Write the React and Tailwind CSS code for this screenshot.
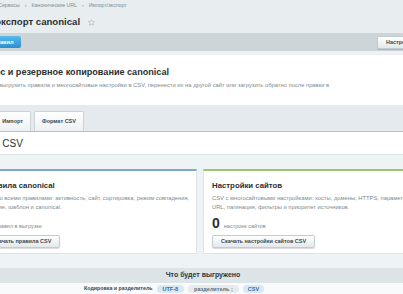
import { Star } from "lucide-react"

const btn =
  "h-[13px] px-[8px] flex items-center rounded-[2px] border border-[#c3ccd1] bg-gradient-to-b from-white to-[#e3e8ea] shadow-[0_1px_1px_rgba(0,0,0,0.15)] text-[5.5px] font-bold text-[#3b4750] whitespace-nowrap"

const Card = ({ accent, title, lines, count, unit, button }) => (
  <div className={`bg-white border border-[#dde4e7] border-t-2 ${accent} h-[85px] px-[8px] pt-[9px]`}>
    <div className="text-[7.8px] font-bold text-[#2a2f33] leading-[11px] whitespace-nowrap">{title}</div>
    <div className="mt-[3px] text-[5.8px] text-[#7d8a92] leading-[9px] whitespace-nowrap">
      {lines[0]}
      <br />
      {lines[1]}
    </div>
    <div className="mt-[4px] flex items-end gap-[4px] h-[14px]">
      <span className="text-[14px] font-bold text-[#2a2f33] leading-[14px]">{count}</span>
      <span className="text-[5.5px] text-[#7d8a92] leading-[8px]">{unit}</span>
    </div>
    <div className="mt-[5px] flex">
      <div className={btn}>{button}</div>
    </div>
  </div>
)

export default function App() {
  return (
    <div className="w-[403px] h-[294px] overflow-hidden bg-[#e8edf0] font-['Liberation_Sans',Arial,sans-serif]">
      <div className="-ml-[60px] w-[500px]">
        {/* breadcrumbs */}
        <div className="h-[12px] pl-[21px] flex items-center gap-[5px] text-[5.2px] text-[#7f8d96] whitespace-nowrap">
          <span>Настройки</span>
          <span>›</span>
          <span>Сервисы</span>
          <span>›</span>
          <span>Канонические URL</span>
          <span>›</span>
          <span>Импорт/экспорт</span>
        </div>

        {/* title */}
        <div className="h-[21px] pl-[17px] flex items-center gap-[8px]">
          <h1 className="text-[9.6px] font-bold text-[#2b3034] whitespace-nowrap">Импорт/экспорт canonical</h1>
          <Star size={7} strokeWidth={2} className="text-[#a7b1b6]" />
        </div>

        {/* toolbar */}
        <div className="h-[18px] bg-[#cdd5d9] flex items-center justify-between pl-[24px] pr-[16px]">
          <div className="h-[12px] px-[8px] flex items-center rounded-[2px] bg-gradient-to-b from-[#58b9ec] to-[#2a8fd0] text-[5.5px] font-bold text-white whitespace-nowrap">
            Список правил
          </div>
          <div className={btn}>Настройки</div>
        </div>
        <div className="h-[4px] bg-[#eef2f4]" />

        {/* heading */}
        <div className="bg-white h-[50px] pt-[12px]">
          <div className="pl-[27px] text-[9.1px] font-bold text-[#2b3034] leading-[11px] whitespace-nowrap">
            Перенос и резервное копирование canonical
          </div>
          <div className="pl-[29px] mt-[3px] text-[5.8px] text-[#7d8a92] leading-[8px] whitespace-nowrap">
            Позволяет выгрузить правила и многосайтовые настройки в CSV, перенести их на другой сайт или загрузить обратно после правки в
          </div>
        </div>

        {/* tabs */}
        <div className="h-[27px] bg-[#e4eaed] border-b border-[#b8c1c5] flex items-end gap-[3px] pl-[13px]">
          {["Экспорт", "Импорт", "Формат CSV"].map((t) => (
            <div
              key={t}
              className="h-[20px] px-[7px] flex items-center rounded-t-[2px] border border-b-0 border-[#cbd3d7] bg-gradient-to-b from-white to-[#edf1f3] text-[5.5px] font-bold text-[#3b4750] whitespace-nowrap"
            >
              {t}
            </div>
          ))}
        </div>

        {/* section title */}
        <div className="bg-white h-[22px] pl-[22px] flex items-center">
          <span className="text-[10px] text-[#2b3034] whitespace-nowrap">Экспорт CSV</span>
        </div>

        {/* cards area */}
        <div className="bg-[#eef3f5] border-t border-[#dce3e6] pt-[14px]">
          <div className="ml-[34px] w-[452px] grid grid-cols-2 gap-[6px]">
            <Card
              accent="border-t-[#7fa7cb]"
              title="Правила canonical"
              lines={[
                "CSV со всеми правилами: активность, сайт, сортировка, режим совпадения,",
                "условие, шаблон и canonical.",
              ]}
              count="0"
              unit="правил в выгрузке"
              button="Скачать правила CSV"
            />
            <Card
              accent="border-t-[#9cc76d]"
              title="Настройки сайтов"
              lines={[
                "CSV с многосайтовыми настройками: хосты, домены, HTTPS, параметры",
                "URL, пагинация, фильтры и приоритет источников.",
              ]}
              count="0"
              unit="настроек сайтов"
              button="Скачать настройки сайтов CSV"
            />
          </div>

          <div className="mt-[14px] h-[15px] bg-[#dde4e7] flex items-center justify-center pl-[26px]">
            <span className="text-[7px] font-bold text-[#2f363b] whitespace-nowrap">Что будет выгружено</span>
          </div>
          <div className="h-[12px] bg-[#f8fafb] flex items-center gap-[4px] pl-[144px] whitespace-nowrap">
            <span className="text-[5.3px] font-bold text-[#3b4750]">Кодировка и разделитель</span>
            <span className="px-[6px] rounded-full bg-[#d8e8f5] text-[5.5px] font-bold text-[#2d6fa3] leading-[8px]">UTF-8</span>
            <span className="px-[6px] rounded-full bg-[#e6ebee] text-[5.5px] font-bold text-[#5f6b73] leading-[8px]">разделитель ;</span>
            <span className="px-[5px] rounded-full bg-[#d8e8f5] text-[5.5px] font-bold text-[#2d6fa3] leading-[8px]">CSV</span>
          </div>
        </div>
      </div>
    </div>
  )
}
